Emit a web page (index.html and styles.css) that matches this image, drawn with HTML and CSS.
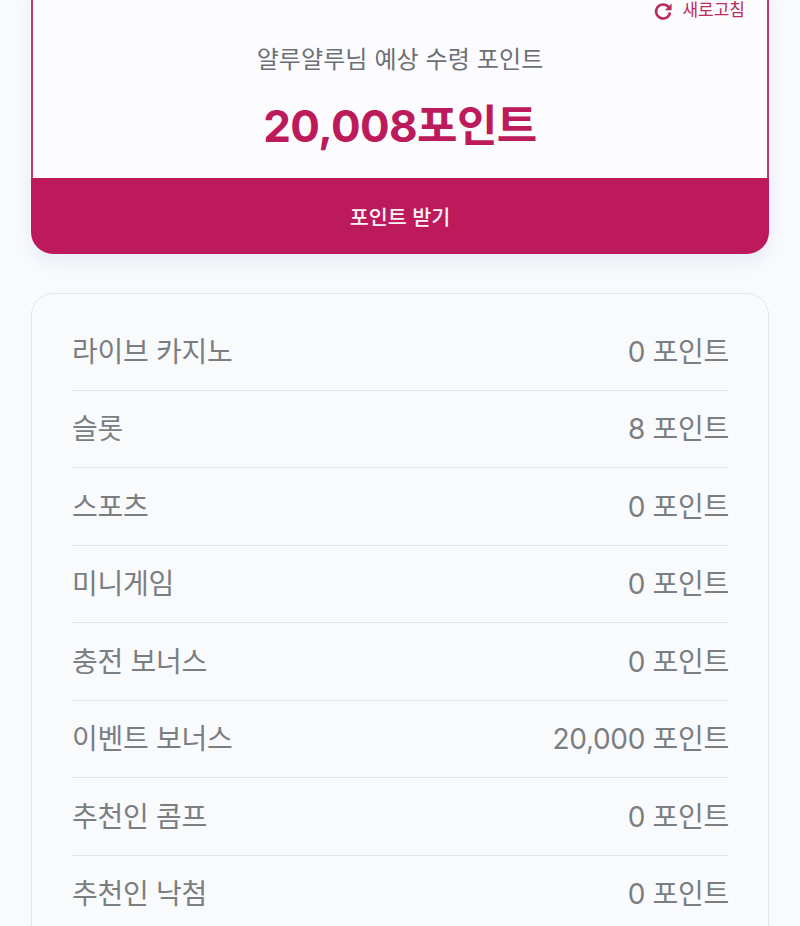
FILE: index.html
```html
<!DOCTYPE html>
<html lang="ko">
<head>
<meta charset="utf-8">
<title>포인트</title>
<link rel="stylesheet" href="styles.css">
</head>
<body>
<main class="page">
  <section class="claim">
    <div class="claim-body">
      <div class="refresh">
        <svg class="refresh-icon" viewBox="0 0 20 20" aria-hidden="true">
          <path d="M15.6 6.2A7 7 0 1 0 17 11.5" fill="none" stroke="currentColor" stroke-width="2.6"/>
          <path d="M18.6 2.4V9.2H11.8Z" fill="currentColor"/>
        </svg>
        <span>새로고침</span>
      </div>
      <h1 class="claim-title">얄루얄루님 예상 수령 포인트</h1>
      <p class="claim-amount">20,008포인트</p>
    </div>
    <button class="claim-button">포인트 받기</button>
  </section>
  <section class="list">
    <div class="row"><span>라이브 카지노</span><span>0 포인트</span></div>
    <div class="row"><span>슬롯</span><span>8 포인트</span></div>
    <div class="row"><span>스포츠</span><span>0 포인트</span></div>
    <div class="row"><span>미니게임</span><span>0 포인트</span></div>
    <div class="row"><span>충전 보너스</span><span>0 포인트</span></div>
    <div class="row"><span>이벤트 보너스</span><span>20,000 포인트</span></div>
    <div class="row"><span>추천인 콤프</span><span>0 포인트</span></div>
    <div class="row"><span>추천인 낙첨</span><span>0 포인트</span></div>
  </section>
</main>
</body>
</html>
```
FILE: styles.css
```css
* { box-sizing: border-box; }
html, body {
  margin: 0;
  height: 926px;
  overflow: hidden;
  background: #f9fafc;
}
body {
  font-family: Inter, "Noto Sans CJK KR", sans-serif;
}
.page {
  padding: 0 31px;
  display: flex;
  flex-direction: column;
  gap: 39px;
  margin-top: -30px;
}
.claim {
  border-radius: 22px;
  box-shadow: 0 8px 18px rgba(90, 110, 220, 0.1);
  overflow: hidden;
  display: flex;
  flex-direction: column;
  height: 284px;
}
.claim-body {
  flex: 1;
  background: #fcfcfe;
  border: 1px solid #c4386f;
  border-width: 0 2px;
  padding: 28px 22px 0;
  display: flex;
  flex-direction: column;
  align-items: center;
}
.refresh {
  align-self: flex-end;
  display: flex;
  align-items: center;
  gap: 9px;
  color: #bc2a62;
  font-size: 17px;
  line-height: 25px;
}
.refresh-icon { width: 20px; height: 20px; }
.claim-title {
  margin: 19px 0 0;
  font-size: 24px;
  line-height: 36px;
  font-weight: 400;
  color: #6c7075;
  letter-spacing: 0.1px;
}
.claim-amount {
  margin: 16px 0 0;
  font-size: 44px;
  line-height: 64px;
  font-weight: 700;
  color: #bc1a5a;
  letter-spacing: -0.6px;
}
.claim-button {
  height: 76px;
  border: 0;
  background: #bc1a5a;
  color: #fdf4f7;
  font: 500 20.7px Inter, "Noto Sans CJK KR", sans-serif;
}
.list {
  border: 1px solid #e3e7ec;
  border-radius: 22px;
  padding: 19px 39px 30px 40px;
  background: #f9fafc;
}
.row {
  height: 77.5px;
  padding-bottom: 3px;
  display: flex;
  justify-content: space-between;
  align-items: center;
  border-bottom: 1px solid #e1e6ea;
  font-size: 28px;
  letter-spacing: -0.3px;
  color: #7b7e81;
}
```
